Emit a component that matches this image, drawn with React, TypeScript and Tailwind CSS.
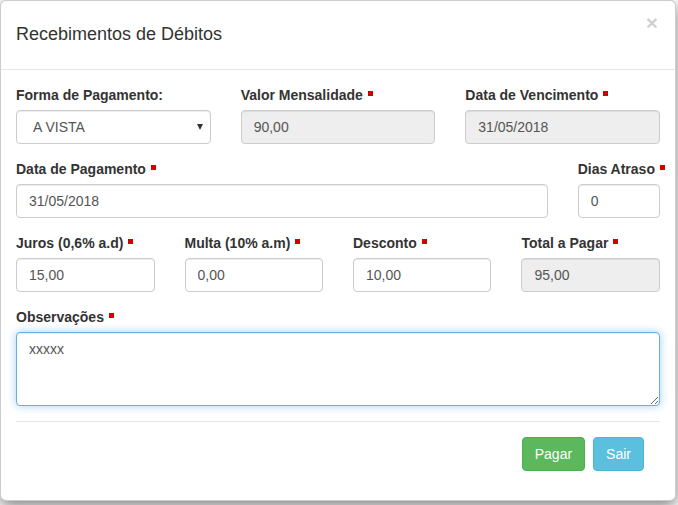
import React from 'react'

function Req() {
  return <span className="ml-[5px] mt-[6px] inline-block h-[5px] w-[5px] bg-[#d40000] align-top" />
}

function Label({ text, req = true }: { text: string; req?: boolean }) {
  return (
    <label className="mb-[5px] block whitespace-nowrap text-[14px] font-bold leading-[20px] text-[#333]">
      {text}
      {req && <Req />}
    </label>
  )
}

function Field({ value, readOnly = false }: { value: string; readOnly?: boolean }) {
  return (
    <input
      type="text"
      defaultValue={value}
      readOnly={readOnly}
      className={`block h-[34px] w-full rounded-[4px] border border-[#ccc] px-[12px] py-[6px] text-[14px] text-[#555] shadow-[inset_0_1px_1px_rgba(0,0,0,0.075)] outline-none ${
        readOnly ? 'bg-[#eee]' : 'bg-white'
      }`}
    />
  )
}

export default function App() {
  return (
    <main className="h-[505px] w-[678px] overflow-hidden bg-white font-['Liberation_Sans',Arial,sans-serif] text-[#333]">
      <div className="relative h-[501px] w-[676px] rounded-[6px] border border-black/20 bg-white shadow-[0_5px_15px_rgba(0,0,0,0.5)]">
        {/* Header */}
        <div className="relative h-[69px] border-b border-[#e5e5e5] px-[15px] pt-[20px]">
          <h4 className="text-[18px] leading-[26px] text-[#333]">Recebimentos de Débitos</h4>
          <button className="absolute right-[17px] top-[11px] text-[21px] font-bold leading-none text-black/20">
            ×
          </button>
        </div>

        {/* Body */}
        <div className="pl-[15px] pr-[15px] pt-[15px]">
          <div className="grid grid-cols-12 gap-x-[30px]">
            <div className="col-span-4 mb-[15px]">
              <Label text="Forma de Pagamento:" req={false} />
              <div className="relative">
                <select className="block h-[34px] w-full appearance-none rounded-[4px] border border-[#ccc] bg-white pl-[16px] pr-[24px] text-[14px] text-[#555] shadow-[inset_0_1px_1px_rgba(0,0,0,0.075)] outline-none">
                  <option>A VISTA</option>
                </select>
                <span className="pointer-events-none absolute right-[8px] top-[14px] h-0 w-0 border-l-[3.5px] border-r-[3.5px] border-t-[6px] border-l-transparent border-r-transparent border-t-[#333]" />
              </div>
            </div>
            <div className="col-span-4 mb-[15px]">
              <Label text="Valor Mensalidade" />
              <Field value="90,00" readOnly />
            </div>
            <div className="col-span-4 mb-[15px]">
              <Label text="Data de Vencimento" />
              <Field value="31/05/2018" readOnly />
            </div>

            <div className="col-span-10 mb-[15px]">
              <Label text="Data de Pagamento" />
              <Field value="31/05/2018" />
            </div>
            <div className="col-span-2 mb-[15px]">
              <Label text="Dias Atraso" />
              <Field value="0" />
            </div>

            <div className="col-span-3 mb-[15px]">
              <Label text="Juros (0,6% a.d)" />
              <Field value="15,00" />
            </div>
            <div className="col-span-3 mb-[15px]">
              <Label text="Multa (10% a.m)" />
              <Field value="0,00" />
            </div>
            <div className="col-span-3 mb-[15px]">
              <Label text="Desconto" />
              <Field value="10,00" />
            </div>
            <div className="col-span-3 mb-[15px]">
              <Label text="Total a Pagar" />
              <Field value="95,00" readOnly />
            </div>

            <div className="col-span-12 mb-[15px]">
              <Label text="Observações" />
              <textarea
                defaultValue="xxxxx"
                className="block h-[74px] w-full rounded-[4px] border border-[#66afe9] bg-white px-[12px] py-[6px] text-[14px] leading-[20px] text-[#555] shadow-[inset_0_1px_1px_rgba(0,0,0,0.075),0_0_8px_rgba(102,175,233,0.6)] outline-none"
              />
            </div>
          </div>

          <div className="border-t border-[#e5e5e5]" />

          <div className="mt-[15px] flex justify-end gap-[8px] pr-[16px]">
            <button className="h-[34px] rounded-[4px] border border-[#4cae4c] bg-[#5cb85c] px-[12px] text-[14px] text-white">
              Pagar
            </button>
            <button className="h-[34px] rounded-[4px] border border-[#46b8da] bg-[#5bc0de] px-[12px] text-[14px] text-white">
              Sair
            </button>
          </div>
        </div>
      </div>
    </main>
  )
}
